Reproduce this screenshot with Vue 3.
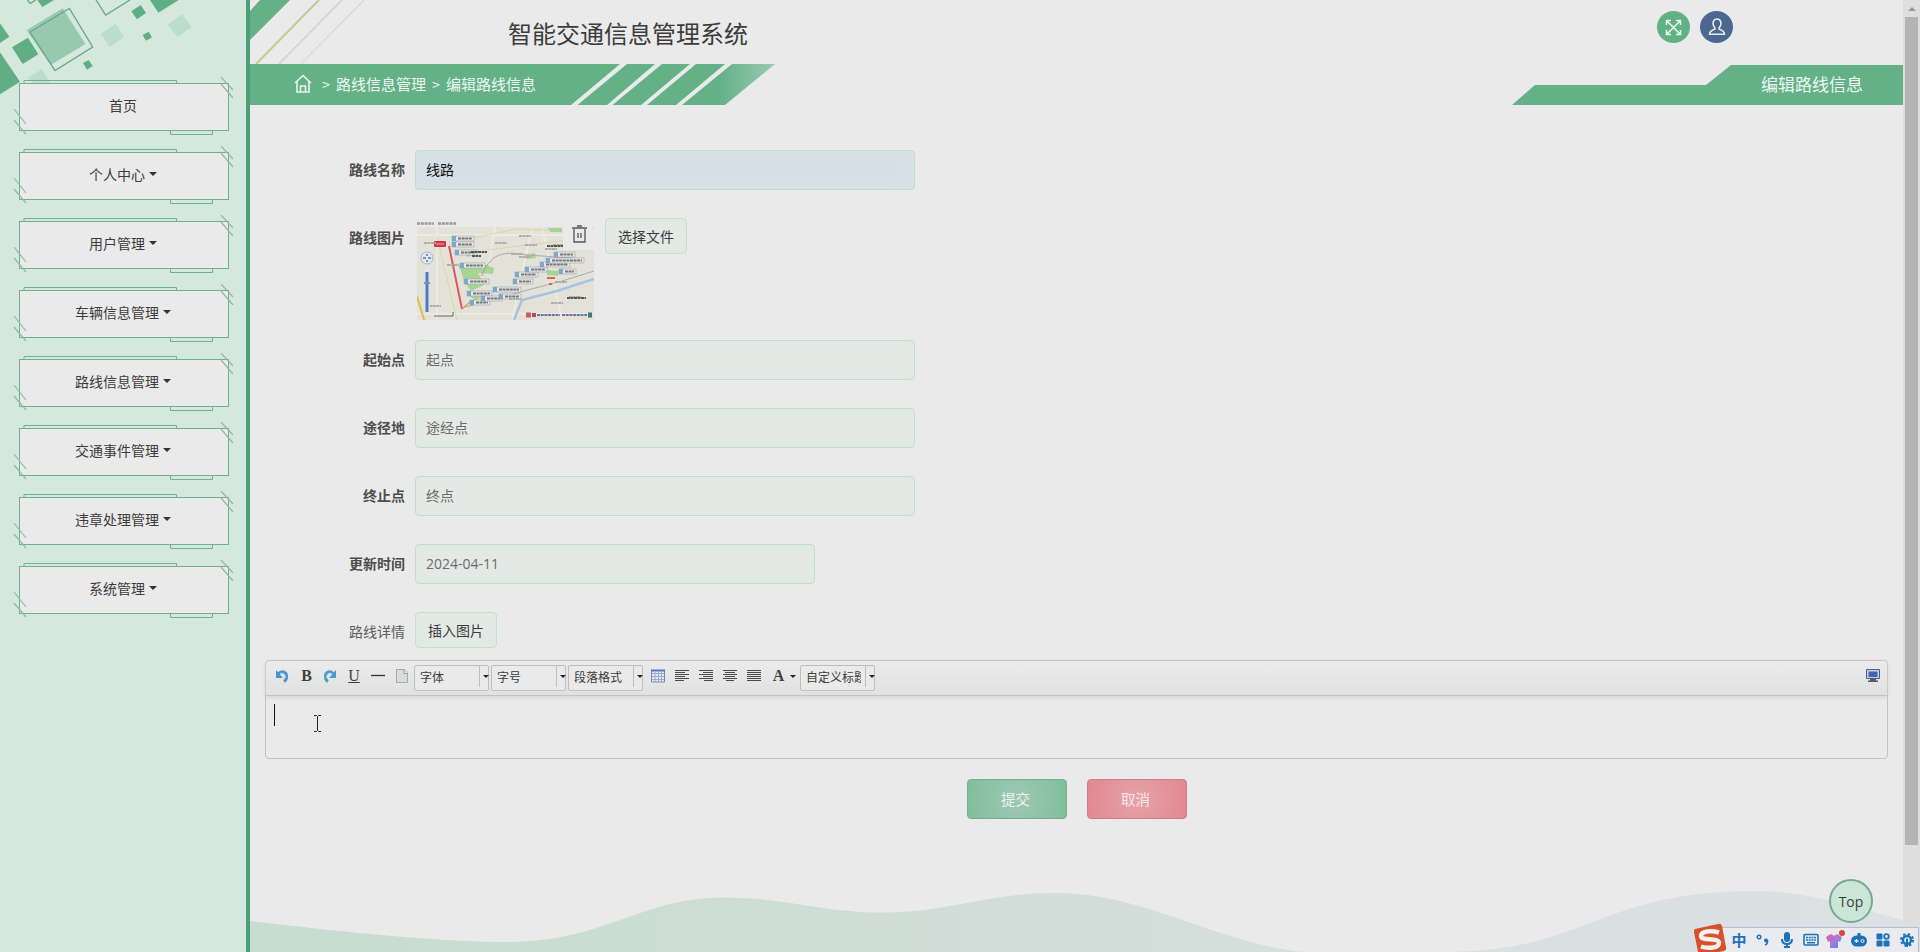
<script setup>
import { ref } from 'vue';

const menu = [
  { name: '首页', sub: false },
  { name: '个人中心', sub: true },
  { name: '用户管理', sub: true },
  { name: '车辆信息管理', sub: true },
  { name: '路线信息管理', sub: true },
  { name: '交通事件管理', sub: true },
  { name: '违章处理管理', sub: true },
  { name: '系统管理', sub: true },
];

const routeName = ref('线路');
const startPoint = ref('起点');
const middlePoint = ref('途经点');
const endPoint = ref('终点');
const updateTime = ref('2024-04-11');

// stations on the route thumbnail: x, y, label width
const stations = [
  [35, 16, 22], [35, 22, 22], [38, 30, 22], [43, 43, 25], [47, 59, 25], [50, 71, 25],
  [53, 80, 20], [64, 76, 21], [76, 67, 28], [82, 74, 22], [96, 59, 20], [98, 52, 23],
  [108, 47, 22], [123, 42, 30], [129, 38, 38], [137, 32, 21], [142, 49, 17],
];
const places = [[78, 23], [102, 16], [108, 25], [102, 37], [94, 34], [128, 29], [136, 25], [134, 83], [152, 77], [138, 62], [7, 23], [30, 45], [92, 79], [12, 86]];
const aligns = [
  [[0, 14], [0, 10], [0, 14], [0, 10], [0, 14], [0, 9]],
  [[0, 14], [4, 14], [0, 14], [4, 14], [0, 14], [5, 14]],
  [[0, 14], [2, 12], [0, 14], [2, 12], [0, 14], [3, 11]],
  [[0, 14], [0, 14], [0, 14], [0, 14], [0, 14], [0, 14]],
];
</script>

<template>
  <div class="page">
    <aside class="sidebar">
      <svg class="squares" width="246" height="100" viewBox="0 0 738 300">
        <g fill="#5fae84">
          <path d="M0 70 28 110 0 129zM0 157 60 245 0 283zM36 142 84 113 115 163 68 192zM394 34 422 15 438 39 411 58zM450 0 536 0 475 38zM112 0 162 0 127 21zM249 189 266 180 278 198 261 209zM428 105 446 95 456 112 438 122z" />
        </g>
        <path d="M302 101 347 72 372 111 329 141zM503 74 546 43 575 81 532 112zM82 235 126 208 151 248 100 248z" fill="#bbdeca" />
        <path d="M80 91 188 25 256 132 152 195z" fill="#96c9ad" />
        <path d="M90 96 208 25 278 141 165 212zM288 0 317 45 390 0M82 0 91 10 108 0" fill="none" stroke="#68a88b" stroke-width="4" />
      </svg>
      <nav class="menu">
        <div v-for="item in menu" :key="item.name" class="menu-item">
          <span>{{ item.name }}</span>
          <i v-if="item.sub" class="caret"></i>
          <svg class="hatch" width="222" height="60" viewBox="0 0 222 60" fill="none">
            <path d="M11 6.500V3.500H163.500V6.500M157.500 54V57.500H199.500V54" stroke="#72af92" />
            <path d="M208 0 220 13M208 7 220 21M1 32 13 47M1 43 13 57" stroke="#91b9a5" stroke-width="1.200" />
          </svg>
        </div>
      </nav>
    </aside>

    <main class="main">
      <header class="header">
        <svg class="slashes" width="130" height="64" fill="none">
          <path d="M10 0H40L0 40V11z" fill="#64b087" />
          <path d="M69 0 6 64" stroke="#c7c791" stroke-width="2" />
          <path d="M92 0 29 64" stroke="#d0d0d0" stroke-width="1.500" />
          <path d="M114 0 51 64" stroke="#dadada" stroke-width="1.500" />
        </svg>
        <h1>智能交通信息管理系统</h1>
        <div class="actions">
          <span class="round green">
            <svg width="17" height="17" fill="none" stroke="#eaf6ef" stroke-width="1.500"><path d="M2 2 15 15M15 2 2 15M1.500 6V1.500H6M11 1.500h4.500V6M1.500 11v4.500H6M11 15.500h4.500V11" /></svg>
          </span>
          <span class="round blue">
            <svg width="18" height="18" fill="none" stroke="#e8edf2" stroke-width="1.500"><path d="M7 10C3.500 6 5 1 9 1s5.500 5 2 9v1c3 1 5.500 2 5.500 5.300H1.500C1.500 13 4 12 7 11z" /></svg>
          </span>
        </div>
      </header>

      <div class="crumb-bar">
        <svg class="crumb-bg" width="1653" height="41">
          <defs>
            <linearGradient id="tip"><stop offset=".4" stop-color="#64b087" /><stop offset="1" stop-color="#9bcbb0" /></linearGradient>
          </defs>
          <path d="M0 0H370L321 41H0zM377 0H405L357 41H327.500zM412 0H440L391 41H362.500zM446 0H475L426 41H397z" fill="#64b087" />
          <path d="M482 0H525L475 41H432z" fill="url(#tip)" />
          <path d="M1262 41 1285 21H1456L1481 1H1653V41z" fill="#64b087" />
        </svg>
        <div class="crumbs">
          <svg width="18" height="20" fill="none" stroke="#e8f5ed" stroke-width="1.600"><path d="M1 9 9 1.500 17 9M3 7.500V18H15V7.500M6.500 18v-6h5v6" /></svg>
          <span class="sep">&gt;</span>
          <span>路线信息管理</span>
          <span class="sep">&gt;</span>
          <span>编辑路线信息</span>
        </div>
        <div class="page-name">编辑路线信息</div>
      </div>

      <form class="form" @submit.prevent>
        <div class="row">
          <label>路线名称</label>
          <input v-model="routeName" class="filled" type="text" />
        </div>
        <div class="row row-picture">
          <label>路线图片</label>
          <div class="thumb">
            <svg width="177" height="100" viewBox="0 0 177 100">
              <rect width="177" height="7" fill="#eaeaea" />
              <path d="M0 3.500H17M21 3.500H39" stroke="#999" stroke-width="2.500" stroke-dasharray="3 .8" />
              <rect y="7" width="177" height="93" fill="#e2e2d9" />
              <path d="M0 15H177M20 7V100M125 7 145 100M0 94H177M78 7 70 55M95 100 115 7" stroke="#ebebe3" stroke-width="2" />
              <path d="M50 19 100 9 177 12M70 30 150 20M0 80 8 100M20 17 40 100M60 60 75 40" fill="none" stroke="#dfd6a2" />
              <path d="M0 76 7 100" stroke="#e6bc42" stroke-width="2" />
              <path d="M42 46 64 43 77 48 76 54 61 53 67 65 54 71 48 63zM46 30 59 34 50 37zM108 35 118 33 119 38 109 39zM130 50 142 51 141 56 130 55zM50 74 65 76 59 81zM131 8H145V12H133z" fill="#a7d492" />
              <path d="M45 88 74 80 107 71 145 61 177 51M65 56C72 35 85 30 110 35L155 38" fill="none" stroke="#aaa" />
              <path d="M97 100 105 80 140 71 177 59" fill="none" stroke="#a6c4dc" stroke-width="2.500" />
              <path d="M32 26 45 89" stroke="#df5857" stroke-width="2" />
              <path d="M45 89 53 82" stroke="#d6a05a" stroke-width="1.500" />
              <rect x="17" y="21" width="12" height="6" rx="1" fill="#cf3347" />
              <path d="M19 24h8" stroke="#f0b1b5" />
              <g v-for="(s, i) in stations" :key="i">
                <rect :x="s[0]" :y="s[1]" :width="s[2]" height="5" fill="#e6e8e8" stroke="#8e969d" stroke-width=".5" />
                <rect :x="s[0]" :y="s[1]" width="4" height="5" fill="#7ba8cc" />
                <path :d="`M${s[0] + 6} ${s[1] + 2.5}h${s[2] - 8}`" stroke="#777" stroke-width="2" stroke-dasharray="3 .6" />
              </g>
              <path v-for="(p, i) in places" :key="'p' + i" :d="`M${p[0]} ${p[1]}h12`" stroke="#adada4" stroke-width="2" stroke-dasharray="3 .5" />
              <path d="M54 32H70M55 36H64M130 26H146M150 78H169" stroke="#555" stroke-width="2" stroke-dasharray="3 .5" />
              <path d="M130 58H138M132 64h3" stroke="#db6549" stroke-width="2" />
              <circle cx="10" cy="38" r="6" fill="#dfe7ef" stroke="#a4b7cc" />
              <path d="M6 38h3M11 38h3M10 34v2M10 40v2" stroke="#527eb1" stroke-width="1.500" />
              <rect x="7" y="48" width="6" height="45" rx="2" fill="#dce4ee" /><path d="M10 52V92" stroke="#557bb7" stroke-width="3" /><path d="M7 63h6" stroke="#7694bb" stroke-width="2" />
              <path d="M17 96H36V92" fill="none" stroke="#666" />
              <path d="M109 95h5" stroke="#d45664" stroke-width="5" /><path d="M115 95h4" stroke="#b83d7a" stroke-width="4" />
              <path d="M120 95H143M145 95H170" stroke="#7172a1" stroke-width="2" stroke-dasharray="3 .7" />
              <path d="M171 95h4" stroke="#3a787e" stroke-width="5" />
              <rect x="146" y="0" width="31" height="30" fill="#eaeaea" /><path d="M177 7v3" stroke="#bbb" />
              <path d="M155 8H170M160 6h5M157 9V22H168V9M161 13V18M164 13V18" fill="none" stroke="#555" stroke-width="1.300" />
            </svg>
          </div>
          <button type="button" class="plain">选择文件</button>
        </div>
        <div class="row">
          <label>起始点</label>
          <input v-model="startPoint" type="text" />
        </div>
        <div class="row">
          <label>途径地</label>
          <input v-model="middlePoint" type="text" />
        </div>
        <div class="row">
          <label>终止点</label>
          <input v-model="endPoint" type="text" />
        </div>
        <div class="row">
          <label>更新时间</label>
          <input v-model="updateTime" class="date" type="text" />
        </div>
        <div class="row row-detail">
          <label class="light">路线详情</label>
          <button type="button" class="plain">插入图片</button>
        </div>

        <div class="editor">
          <div class="toolbar">
            <span class="tool"><svg width="14" height="14" fill="none"><path d="M3 5C7 1 12 3 11.500 8q0 3-2.500 4.500" stroke="#4c91c9" stroke-width="3" /><path d="M1 1V9H8z" fill="#4c91c9" /><path d="M5 4.500Q11 3 10.500 9" stroke="#a0cde9" /></svg></span>
            <span class="tool letter">B</span>
            <span class="tool"><svg width="14" height="14" fill="none"><path d="M11 5C7 1 2 3 2.500 8q0 3 2.500 4.500" stroke="#4c9ac9" stroke-width="3" /><path d="M13 1V9H6z" fill="#4c9ac9" /><path d="M9 4.500Q3 3 3.500 9" stroke="#a0d5e9" /></svg></span>
            <span class="tool letter under">U</span>
            <span class="tool"><svg width="14" height="14"><path d="M0 6.500H14" stroke="#333" stroke-width="1.300" /></svg></span>
            <span class="tool"><svg width="14" height="14"><path d="M1.500.5H9.500L12.500 4V13.500H1.500z" fill="#d9dcdd" stroke="#a4a8aa" /><path d="M9 .5V4.500H12.500" fill="#f0f0f0" stroke="#999" /></svg></span>
            <div class="combo"><span>字体</span><i></i></div>
            <div class="combo"><span>字号</span><i></i></div>
            <div class="combo"><span>段落格式</span><i></i></div>
            <span class="tool table"><svg width="14" height="14"><path d="M.5 1.500H13.500V13H.5z" fill="#e4eaf4" stroke="#7787b3" /><path d="M0 1.500H14" stroke="#5578c0" stroke-width="2" /><path d="M1 4.500H13M1 7.500H13M1 10.500H13M4 3V13M7.500 3V13M10.500 3V13" stroke="#9caacb" /></svg></span>
            <span v-for="(a, i) in aligns" :key="'a' + i" class="tool"><svg width="14" height="14"><path v-for="(l, j) in a" :key="j" :d="`M${l[0]} ${j * 2 + 1}.5H${l[1]}`" stroke="#494949" /></svg></span>
            <span class="tool letter">A</span>
            <span class="arrow"></span>
            <div class="combo"><span>自定义标题</span><i></i></div>
            <span class="tool screen"><svg width="14" height="14"><path d="M.5.500H13.500V9.500H.5z" fill="#c7cfde" stroke="#535e7e" /><path d="M2.500 2.500H11.500V8H2.500z" fill="#4265ae" /><path d="M4 10h6v1.500h2V13H2V11.500h2z" fill="#555d6d" /></svg></span>
          </div>
          <div class="editor-body">
            <i class="text-caret"></i>
            <svg class="ibeam" width="9" height="17" fill="none" stroke="#222"><path d="M1 .5H3.500L4.500 1.500 5.500.5H8M4.500 1.500V15.500M1 16.500H3.500L4.500 15.500 5.500 16.500H8" /></svg>
          </div>
        </div>

        <div class="submit-row">
          <button type="submit" class="submit">提交</button>
          <button type="button" class="cancel">取消</button>
        </div>
      </form>

      <svg class="wave" width="1653" height="70" viewBox="250 882 1653 70">
        <defs>
          <linearGradient id="wave"><stop offset="0" stop-color="#c6ddcf" /><stop offset=".45" stop-color="#d1ddd8" /><stop offset=".8" stop-color="#d9e0e1" /><stop offset="1" stop-color="#dce1e4" /></linearGradient>
        </defs>
        <path d="M250 921C300 927 430 942 506 942C606 942 640 897 725 897.500C790 898 820 912.500 883 912.500C950 912.500 985 893 1057 893C1145 893 1220 945 1305 952H1452C1590 949 1600 891 1755 891C1810 891 1860 909 1903 920V952H250z" fill="url(#wave)" />
      </svg>
    </main>

    <div class="scrollbar"><i></i><b></b></div>

    <div class="to-top">Top</div>

    <div class="ime">
      <svg class="ime-logo" width="34" height="32">
        <path d="M1 6 24 1Q27 0 28 3L32 24Q33 27 30 28L8 32Q5 32 4 29L0 9Q-.5 7 1 6z" fill="#d7502d" />
        <path d="M25 9.500C17 7 7 8 7 13C7 18.500 25 14 25 20C25 25 14 26 7 23.500" fill="none" stroke="#f5efec" stroke-width="4.500" />
      </svg>
      <span class="ime-item zh">中</span>
      <span class="ime-item"><svg width="14" height="14"><circle cx="3" cy="4" r="1.800" fill="none" stroke="#1a72bb" stroke-width="1.400" /><circle cx="10" cy="7.500" r="2" fill="#1a72bb" /><path d="M11.500 7q.5 4-2.500 5" fill="none" stroke="#1a72bb" stroke-width="1.500" /></svg></span>
      <span class="ime-item"><svg width="14" height="16" fill="none" stroke="#1a72bb" stroke-width="2"><rect x="4" y="0" width="6" height="10" rx="3" fill="#1a72bb" stroke="none" /><path d="M2 7q0 5 5 5t5-5M7 12v3M4 15h6" /></svg></span>
      <span class="ime-item"><svg width="16" height="14"><rect x="1" y="1.500" width="14" height="10.500" rx="1" fill="none" stroke="#1a72bb" stroke-width="1.600" /><path d="M3 4.500H13M3 7H13" stroke="#1a72bb" stroke-width="1.700" stroke-dasharray="2 .7" /><path d="M4 9.700H12" stroke="#1a72bb" stroke-width="1.500" /></svg></span>
      <span class="ime-item"><svg width="20" height="20"><defs><linearGradient id="shirt" x2="1" y2="1"><stop offset="0" stop-color="#e85b9a" /><stop offset=".5" stop-color="#a979dd" /><stop offset="1" stop-color="#3f90ed" /></linearGradient></defs><path d="M6 4Q9 7 12 4L17 7 15 12 13 11V18H5V11L3 12 1 7z" fill="url(#shirt)" /><circle cx="17" cy="3" r="3" fill="#d94340" /></svg></span>
      <span class="ime-item"><svg width="16" height="14"><path d="M6.500 0h3v3h-3z" fill="#1a72bb" /><rect x="0" y="2.500" width="16" height="11" rx="5.500" fill="#1a72bb" /><path d="M3.500 8h4M5.500 6v4" stroke="#eee" stroke-width="1.300" /><circle cx="11.500" cy="8" r="1.500" fill="none" stroke="#eee" /></svg></span>
      <span class="ime-item"><svg width="14" height="14" fill="#1a72bb"><rect x=".5" y=".5" width="6" height="6" rx="1" /><circle cx="10.500" cy="3.500" r="2.300" fill="none" stroke="#1a72bb" stroke-width="1.800" /><rect x=".5" y="7.500" width="6" height="6" rx="1" /><rect x="7.500" y="7.500" width="6" height="6" rx="1" /></svg></span>
      <span class="ime-item"><svg width="14" height="14" fill="none" stroke="#1a72bb"><circle cx="7" cy="7" r="4" stroke-width="2.400" /><circle cx="7" cy="7" r="6" stroke-width="2" stroke-dasharray="2.400 2.310" /><path d="M7 5.500V14" stroke-width="2" /></svg></span>
    </div>
  </div>
</template>

<style>
body {
  margin: 0;
  overflow: hidden;
  background: #eaeaea;
}
</style>

<style scoped>
.page {
  position: relative;
  display: flex;
  width: 1920px;
  height: 952px;
  overflow: hidden;
  color: #3c3c3c;
  background: #eaeaea;
  font-family: "Noto Sans CJK SC", "Open Sans", sans-serif;
  font-size: 14px;
}

.page * {
  box-sizing: border-box;
}

svg {
  display: block;
}

.sidebar {
  position: relative;
  flex: none;
  width: 250px;
  border-right: 4px solid #4b9f77;
  background: #d5e8dd;
}

.squares {
  position: absolute;
  top: 0;
  left: 0;
}

.menu {
  display: flex;
  flex-direction: column;
  gap: 21px;
  padding: 83px 17px 0 19px;
}

.menu-item {
  position: relative;
  display: flex;
  align-items: center;
  justify-content: center;
  height: 48px;
  padding: 0 2px 4px 0;
  border: 1px solid #72af92;
  background: #eaeaea;
}

.hatch {
  position: absolute;
  top: -7px;
  left: -7px;
}

.caret {
  margin-left: 4px;
  border: 4px solid transparent;
  border-top-color: #333;
  border-bottom: 0;
}

.main {
  position: relative;
  flex: none;
  width: 1653px;
}

.header {
  display: flex;
  position: relative;
  height: 64px;
  justify-content: space-between;
  padding: 0 170px 0 258px;
}

.slashes {
  position: absolute;
  top: 0;
  left: 0;
}

h1 {
  margin: 0;
  font-size: 24px;
  font-weight: 400;
  line-height: 65px;
}

.actions {
  display: flex;
  gap: 10px;
  padding-top: 11px;
}

.round {
  display: flex;
  align-items: center;
  justify-content: center;
  width: 33px;
  height: 32px;
  border-radius: 50%;
}

.green {
  background: #60b184;
}

.blue {
  background: #4b6990;
}

.crumb-bar {
  position: relative;
  display: flex;
  justify-content: space-between;
  height: 41px;
  padding: 0 40px 0 44px;
  color: #edf8f1;
  font-size: 15px;
  line-height: 40px;
}

.crumb-bg {
  position: absolute;
  top: 0;
  left: 0;
}

.crumbs {
  position: relative;
  display: flex;
  align-items: center;
  padding-bottom: 2px;
}

.crumbs svg {
  margin-right: 10px;
}

.sep {
  width: 14px;
  font-size: 14px;
}

.sep ~ .sep {
  width: 20px;
  padding-left: 6px;
}

.page-name {
  position: relative;
  font-size: 17px;
}

.form {
  padding: 45px 15px 0;
}

.row {
  display: flex;
  align-items: flex-start;
  height: 40px;
  margin-bottom: 28px;
}

.row-picture {
  height: 102px;
  margin-bottom: 20px;
}

.row-detail {
  height: 36px;
  margin-bottom: 12px;
}

label {
  width: 140px;
  margin-right: 10px;
  color: #4d4d4d;
  font-weight: 600;
  line-height: 38px;
  text-align: right;
}

label.light {
  color: #5d5d5d;
  font-weight: 400;
}

input {
  width: 500px;
  height: 40px;
  padding: 0 10px 2px;
  border: 1px solid #bedfcd;
  border-radius: 4px;
  outline: 0;
  color: #6b6b6b;
  background: #e5e9e6;
  box-shadow: inset 0 0 12px #dbe9e1;
  font: 14px "Open Sans", "Noto Sans CJK SC", sans-serif;
}

input.filled {
  color: #111;
  background: #d6dfe7;
  box-shadow: inset 0 0 20px #d6e5e1;
}

input.date {
  width: 400px;
}

.thumb {
  width: 190px;
  padding: 2px 0 0 2px;
}

button {
  font-family: inherit;
}

.plain {
  width: 82px;
  height: 36px;
  padding: 0;
  border: 1px solid #c3dfd0;
  border-radius: 4px;
  color: #3c3c3c;
  background: #e3e9e5;
  box-shadow: inset 0 0 10px #dceae2;
  font-size: 14px;
}

.editor {
  height: 99px;
  border: 1px solid #c3c3c3;
  border-radius: 4px;
}

.toolbar {
  display: flex;
  align-items: center;
  height: 35px;
  padding: 0 2px 4px 4px;
  border-bottom: 1px solid #c3c3c3;
  border-radius: 4px 4px 0 0;
  background: linear-gradient(#ebebeb, #e0e1e1);
  box-shadow: 0 1px 4px #d0d0d0;
}

.tool {
  display: flex;
  flex: none;
  align-items: center;
  justify-content: center;
  width: 24px;
  height: 20px;
}

.table {
  margin-left: 1px;
}

.letter {
  padding: 0 0 1px 1px;
  color: #404040;
  font: bold 16px "Liberation Serif", serif;
}

.under {
  padding-left: 0;
  font-weight: 400;
  text-decoration: underline;
}

.combo {
  display: flex;
  flex: none;
  width: 75px;
  height: 26px;
  margin: 3px 2px 0 0;
  border: 1px solid #bebebe;
  border-radius: 2px;
  background: #eaeaea;
  font-size: 12px;
  line-height: 22px;
}

.combo span {
  flex: none;
  width: 60px;
  padding-left: 5px;
  overflow: hidden;
  white-space: nowrap;
}

.combo i {
  display: flex;
  width: 13px;
  height: 21px;
  margin-left: 4px;
  border-left: 1px solid #bebebe;
}

.combo i::after,
.arrow {
  flex: none;
  margin: 9px 0 0 3px;
  border: 3px solid transparent;
  border-top-color: #222;
  border-bottom: 0;
  content: "";
  width: 0;
  height: 3px;
}

.arrow {
  margin: 1px 4px 0 0;
}

.screen {
  margin-left: auto;
}

.editor-body {
  display: flex;
  padding: 8px;
}

.text-caret {
  width: 1px;
  height: 22px;
  background: #111;
}

.ibeam {
  margin: 11px 0 0 38px;
}

.submit-row {
  display: flex;
  gap: 20px;
  justify-content: center;
  padding-top: 20px;
}

.submit,
.cancel {
  width: 100px;
  height: 40px;
  padding: 0 2px 1px 0;
  border: 1px solid #78ae8f;
  border-radius: 4px;
  color: #e9f4ed;
  background: radial-gradient(circle, #9fc9b2, #7fbe9b);
  font-size: 14.5px;
}

.cancel {
  border-color: #cc7d88;
  color: #f5e7e9;
  background: radial-gradient(circle, #e5a3a9, #e38790);
}

.wave {
  position: absolute;
  bottom: 0;
  left: 0;
}

.scrollbar {
  display: flex;
  flex: none;
  flex-direction: column;
  align-items: center;
  width: 17px;
  background: #dedede;
}

.scrollbar i {
  margin: 7px 0 6px;
  border: 4px solid transparent;
  border-top: 0;
  border-bottom-color: #999;
}

.scrollbar b {
  width: 13px;
  height: 828px;
  background: #b4b4b4;
}

.to-top {
  position: absolute;
  top: 879px;
  left: 1829px;
  width: 44px;
  height: 44px;
  border: 2px solid #76aa90;
  border-radius: 50%;
  background: #cae6d6;
  font: 14px/42px "Open Sans", sans-serif;
  text-align: center;
}

.ime {
  position: absolute;
  right: 1px;
  bottom: 0;
  display: flex;
  width: 198px;
  height: 25px;
  padding-left: 5px;
  border: 1px solid #b3bfd3;
  border-bottom: 0;
  background: #e9ebee;
}

.ime-logo {
  position: absolute;
  top: -5px;
  left: -28px;
}

.ime-item {
  display: flex;
  flex: none;
  align-items: center;
  justify-content: center;
  width: 24px;
  height: 23px;
}

.zh {
  color: #1a72bb;
  font-size: 15px;
  font-weight: 700;
}
</style>
